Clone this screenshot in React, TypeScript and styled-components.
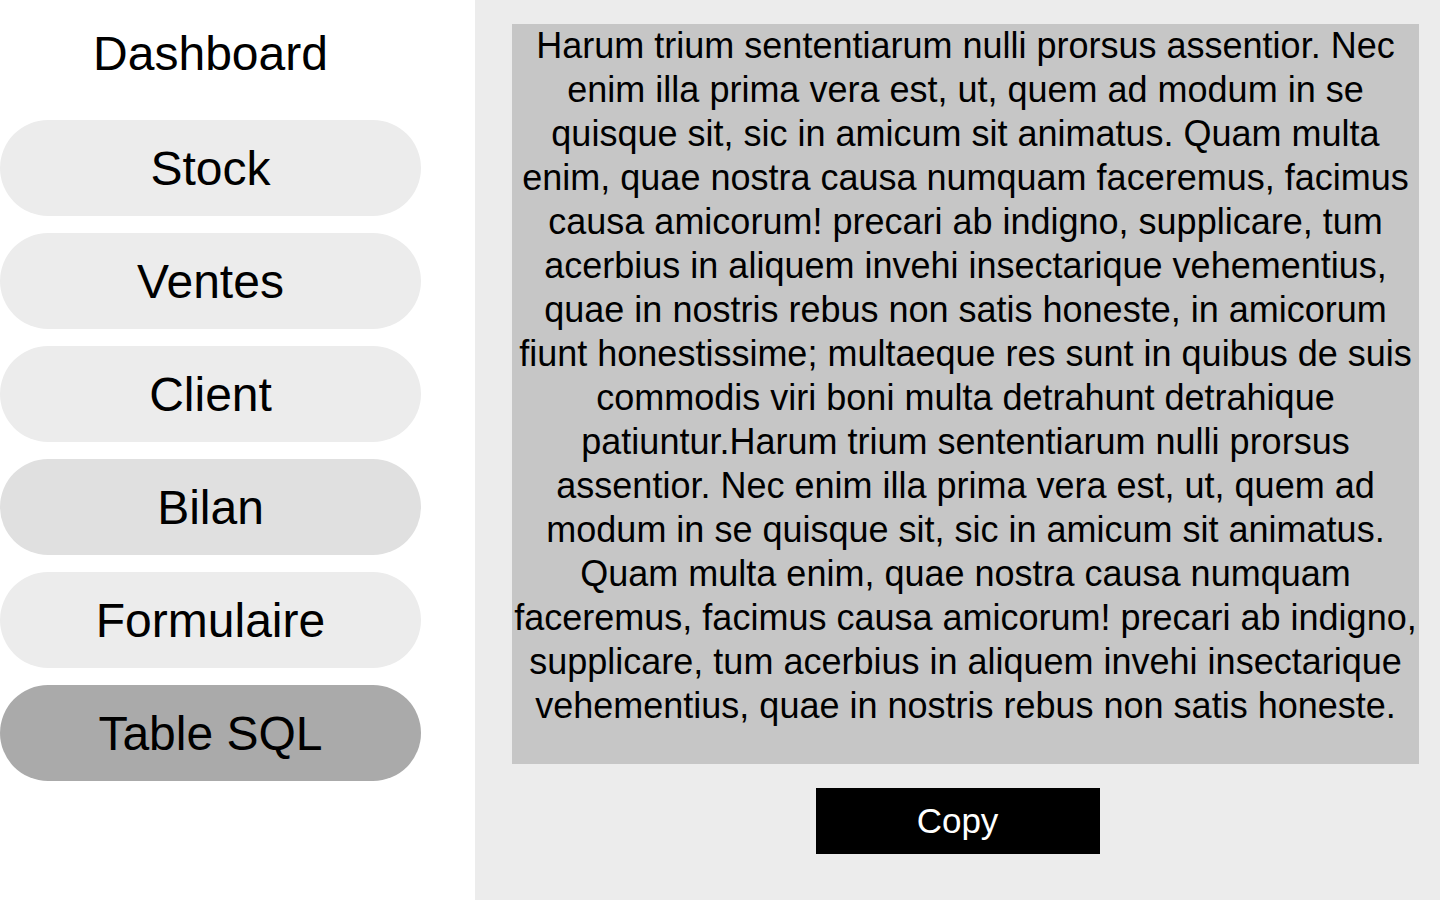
import React from "react"
import styled, { createGlobalStyle } from "styled-components"

const GlobalStyle = createGlobalStyle`
  html, body {
    margin: 0;
    padding: 0;
  }

  body {
    font-family: "Liberation Sans", Arial, sans-serif;
    color: #000;
    background: #fff;
  }
`

const Layout = styled.div`
  display: flex;
  height: 900px;
`

const Sidebar = styled.nav`
  width: 475px;
  flex-shrink: 0;
  background: #fff;
`

const Title = styled.h1`
  width: 421px;
  margin: 26px 0 39px;
  font-size: 48px;
  font-weight: normal;
  line-height: 55px;
  text-align: center;
`

const Menu = styled.ul`
  display: flex;
  flex-direction: column;
  gap: 17px;
  margin: 0;
  padding: 0;
  list-style: none;
`

type Tone = "idle" | "hover" | "active"

const tones: Record<Tone, string> = {
  idle: "#ececec",
  hover: "#e0e0e0",
  active: "#aaaaaa",
}

const MenuButton = styled.button<{ $tone: Tone }>`
  display: flex;
  align-items: center;
  justify-content: center;
  width: 421px;
  height: 96px;
  border: none;
  border-radius: 48px;
  background: ${({ $tone }) => tones[$tone]};
  font-family: inherit;
  font-size: 48px;
  color: #000;
  cursor: pointer;
`

const Main = styled.main`
  flex: 1;
  display: flex;
  flex-direction: column;
  align-items: center;
  background: #ececec;
  padding-top: 24px;
  box-sizing: border-box;
`

const TextBox = styled.p`
  width: 907px;
  margin: 0 0 24px 16px;
  padding: 0 1px 36px;
  box-sizing: border-box;
  background: #c6c6c6;
  font-size: 36px;
  line-height: 44px;
  text-align: center;
`

const CopyButton = styled.button`
  width: 284px;
  height: 66px;
  border: none;
  background: #000;
  color: #fff;
  font-family: inherit;
  font-size: 35px;
  cursor: pointer;
`

const items: { label: string; tone: Tone }[] = [
  { label: "Stock", tone: "idle" },
  { label: "Ventes", tone: "idle" },
  { label: "Client", tone: "idle" },
  { label: "Bilan", tone: "hover" },
  { label: "Formulaire", tone: "idle" },
  { label: "Table SQL", tone: "active" },
]

const text =
  "Harum trium sententiarum nulli prorsus assentior. Nec enim illa prima vera est, ut, quem ad modum in se quisque sit, sic in amicum sit animatus. Quam multa enim, quae nostra causa numquam faceremus, facimus causa amicorum! precari ab indigno, supplicare, tum acerbius in aliquem invehi insectarique vehementius, quae in nostris rebus non satis honeste, in amicorum fiunt honestissime; multaeque res sunt in quibus de suis commodis viri boni multa detrahunt detrahique patiuntur." +
  "Harum trium sententiarum nulli prorsus assentior. Nec enim illa prima vera est, ut, quem ad modum in se quisque sit, sic in amicum sit animatus. Quam multa enim, quae nostra causa numquam faceremus, facimus causa amicorum! precari ab indigno, supplicare, tum acerbius in aliquem invehi insectarique vehementius, quae in nostris rebus non satis honeste."

const App = () => (
  <>
    <GlobalStyle />
    <Layout>
      <Sidebar>
        <Title>Dashboard</Title>
        <Menu>
          {items.map((item) => (
            <li key={item.label}>
              <MenuButton $tone={item.tone}>{item.label}</MenuButton>
            </li>
          ))}
        </Menu>
      </Sidebar>

      <Main>
        <TextBox>{text}</TextBox>
        <CopyButton>Copy</CopyButton>
      </Main>
    </Layout>
  </>
)

export default App
